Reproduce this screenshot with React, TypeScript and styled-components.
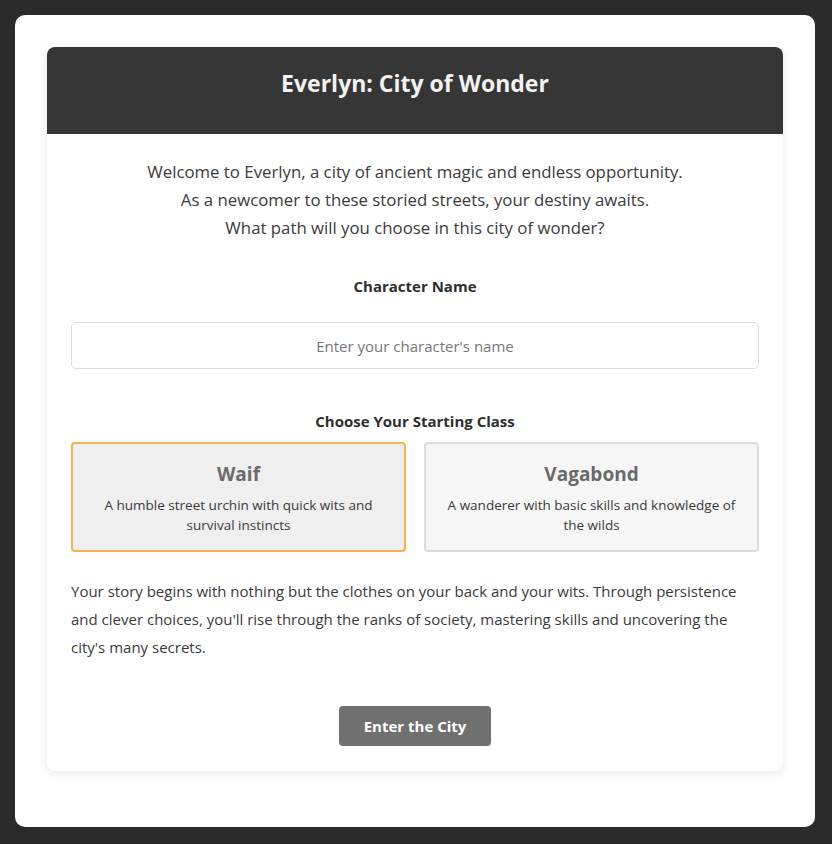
import React, { useState } from "react";
import styled, { createGlobalStyle } from "styled-components";

const Global = createGlobalStyle`
  html, body { margin: 0; padding: 0; background: #2b2b2b; }
  body { font-family: "Open Sans", "Noto Sans", sans-serif; color: #333; }
  * { box-sizing: border-box; }
`;

const Page = styled.div`
  padding: 15px 17px 18px 15px;
  min-height: 844px;
`;

const Frame = styled.div`
  background: #fff;
  border-radius: 10px;
  padding: 32px 32px 56px;
`;

const Card = styled.div`
  background: #fff;
  border-radius: 8px;
  box-shadow: 0 2px 10px rgba(0, 0, 0, 0.1);
  overflow: hidden;
`;

const Header = styled.header`
  background: #363636;
  height: 87px;
  display: flex;
  justify-content: center;
  padding-top: 21px;
`;

const Title = styled.h1`
  margin: 0;
  color: #f2f2f2;
  font-size: 23px;
  font-weight: 700;
  line-height: 30px;
`;

const Body = styled.div`
  padding: 24px 24px 25px;
  display: flex;
  flex-direction: column;
`;

const Intro = styled.p`
  margin: 0;
  text-align: center;
  font-size: 16.8px;
  line-height: 28px;
  color: #3a3a3a;
`;

const Label = styled.div<{ $top: number }>`
  margin-top: ${(p) => p.$top}px;
  text-align: center;
  font-weight: 700;
  font-size: 15px;
  line-height: 20px;
  color: #2e2e2e;
`;

const NameInput = styled.input`
  margin-top: 26px;
  height: 47px;
  width: 100%;
  border: 1px solid #dcdcdc;
  border-radius: 5px;
  text-align: center;
  font-family: inherit;
  font-size: 15px;
  color: #333;
  outline: none;
  &::placeholder { color: #767676; }
`;

const Classes = styled.div`
  margin-top: 11px;
  display: grid;
  grid-template-columns: 1fr 1fr;
  gap: 18px;
`;

const ClassCard = styled.button<{ $selected: boolean }>`
  height: 110px;
  border-radius: 4px;
  border: 2px solid ${(p) => (p.$selected ? "#f4b350" : "#dcdcdc")};
  background: ${(p) => (p.$selected ? "#efefef" : "#f6f6f6")};
  font-family: inherit;
  display: flex;
  flex-direction: column;
  align-items: center;
  padding: 17px 14px 0;
  cursor: pointer;
`;

const ClassName = styled.div`
  font-size: 19px;
  font-weight: 700;
  color: #6a6a6a;
  line-height: 26px;
`;

const ClassDesc = styled.div`
  margin-top: 8px;
  font-size: 13.5px;
  line-height: 20px;
  color: #3a3a3a;
  text-align: center;
`;

const Story = styled.p`
  margin: 25px 0 0;
  font-size: 15px;
  line-height: 28px;
  color: #3a3a3a;
`;

const Actions = styled.div`
  margin-top: 45px;
  display: flex;
  justify-content: center;
`;

const EnterButton = styled.button`
  width: 152px;
  height: 40px;
  border: none;
  border-radius: 4px;
  background: #707070;
  color: #fff;
  font-family: inherit;
  font-size: 15px;
  font-weight: 700;
  cursor: pointer;
`;

const classes = [
  { id: "waif", name: "Waif", desc: "A humble street urchin with quick wits and survival instincts" },
  { id: "vagabond", name: "Vagabond", desc: "A wanderer with basic skills and knowledge of the wilds" },
];

export default function App() {
  const [selected, setSelected] = useState("waif");
  const [name, setName] = useState("");
  return (
    <Page>
      <Global />
      <Frame>
        <Card>
          <Header>
            <Title>Everlyn: City of Wonder</Title>
          </Header>
          <Body>
            <Intro>
              Welcome to Everlyn, a city of ancient magic and endless opportunity.
              <br />
              As a newcomer to these storied streets, your destiny awaits.
              <br />
              What path will you choose in this city of wonder?
            </Intro>
            <Label $top={34}>Character Name</Label>
            <NameInput
              placeholder="Enter your character's name"
              value={name}
              onChange={(e) => setName(e.target.value)}
            />
            <Label $top={42}>Choose Your Starting Class</Label>
            <Classes>
              {classes.map((c) => (
                <ClassCard key={c.id} $selected={selected === c.id} onClick={() => setSelected(c.id)}>
                  <ClassName>{c.name}</ClassName>
                  <ClassDesc>{c.desc}</ClassDesc>
                </ClassCard>
              ))}
            </Classes>
            <Story>
              Your story begins with nothing but the clothes on your back and your wits. Through persistence
              and clever choices, you'll rise through the ranks of society, mastering skills and uncovering the
              city's many secrets.
            </Story>
            <Actions>
              <EnterButton>Enter the City</EnterButton>
            </Actions>
          </Body>
        </Card>
      </Frame>
    </Page>
  );
}
